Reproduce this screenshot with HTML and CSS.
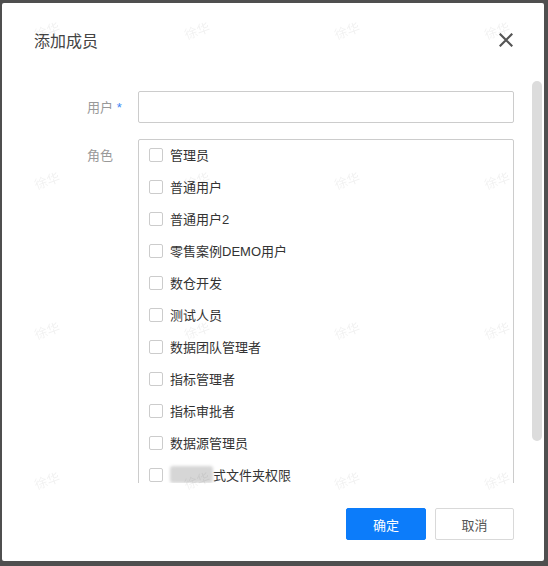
FILE: index.html
```html
<!DOCTYPE html>
<html lang="zh-CN">
<head>
    <meta charset="UTF-8">
    <title>添加成员</title>
    <link rel="stylesheet" href="styles.css">
</head>
<body>
    <div class="dialog">
        <div class="dialog-header">
            <span class="dialog-title">添加成员</span>
            <svg class="close" width="14" height="14" viewBox="0 0 14 14">
                <path d="M1.5 1.5 L12.5 12.5 M12.5 1.5 L1.5 12.5" stroke="#555" stroke-width="2.2" stroke-linecap="square"/>
            </svg>
        </div>

        <div class="body-wrap">
            <div class="dialog-body">
                <div class="form-row">
                    <label class="form-label">用户 <span class="req">*</span></label>
                    <input class="form-input" type="text">
                </div>
                <div class="form-row">
                    <label class="form-label">角色</label>
                    <div class="role-list">
                        <label class="role"><span class="box"></span>管理员</label>
                        <label class="role"><span class="box"></span>普通用户</label>
                        <label class="role"><span class="box"></span>普通用户2</label>
                        <label class="role"><span class="box"></span>零售案例DEMO用户</label>
                        <label class="role"><span class="box"></span>数仓开发</label>
                        <label class="role"><span class="box"></span>测试人员</label>
                        <label class="role"><span class="box"></span>数据团队管理者</label>
                        <label class="role"><span class="box"></span>指标管理者</label>
                        <label class="role"><span class="box"></span>指标审批者</label>
                        <label class="role"><span class="box"></span>数据源管理员</label>
                        <label class="role"><span class="box"></span><span class="blur"></span>式文件夹权限</label>
                        <label class="role"><span class="box"></span>测试角色</label>
                    </div>
                </div>
            </div>
            <!-- 滚动条 -->
            <div class="scroll-thumb"></div>
        </div>

        <div class="dialog-footer">
            <button class="btn btn-primary">确定</button>
            <button class="btn">取消</button>
        </div>
    </div>

    <!-- 水印 -->
    <div class="watermark">
        <span>徐华</span><span>徐华</span><span>徐华</span><span>徐华</span>
        <span>徐华</span><span>徐华</span><span>徐华</span><span>徐华</span>
        <span>徐华</span><span>徐华</span><span>徐华</span><span>徐华</span>
        <span>徐华</span><span>徐华</span><span>徐华</span><span>徐华</span>
    </div>
</body>
</html>
```

FILE: styles.css
```css
* {
    margin: 0;
    padding: 0;
    box-sizing: border-box;
}
body {
    font-family: 'Liberation Sans', 'Noto Sans CJK SC', sans-serif;
    font-size: 13px;
    color: #333;
    background-color: #4f4f4f;
    width: 548px;
    height: 566px;
    overflow: hidden;
}
.dialog {
    margin: 3px 0 0 2px;
    width: 542px;
    height: 558px;
    background-color: #fff;
    border-radius: 2px;
    display: flex;
    flex-direction: column;
}
.dialog-header {
    height: 74px;
    display: flex;
    align-items: center;
    justify-content: space-between;
    padding: 0 31px 0 32px;
}
.dialog-title {
    font-size: 16px;
    color: #444;
}
.close {
    display: block;
}
.body-wrap {
    position: relative;
    height: 406px;
}
.dialog-body {
    height: 100%;
    overflow: hidden;
    padding: 14px 30px 9px 32px;
}
.scroll-thumb {
    position: absolute;
    top: 4px;
    right: 2px;
    width: 10px;
    height: 360px;
    background-color: #dcdcdc;
    border-radius: 5px;
}
.form-row {
    display: flex;
    align-items: flex-start;
    margin-bottom: 16px;
}
.form-row:last-child {
    margin-bottom: 0;
}
.form-label {
    width: 104px;
    flex-shrink: 0;
    padding-left: 53px;
    padding-top: 2px;
    line-height: 30px;
    color: #999;
}
.req {
    color: #3d86f5;
}
.form-input {
    flex: 1;
    height: 32px;
    border: 1px solid #ccc;
    border-radius: 2px;
    outline: none;
}
.role-list {
    flex: 1;
    border: 1px solid #ccc;
    border-radius: 2px;
    padding: 0 10px;
}
.role {
    height: 32px;
    padding-bottom: 3px;
    display: flex;
    align-items: center;
    color: #333;
}
.box {
    width: 14px;
    height: 14px;
    border: 1px solid #ccc;
    border-radius: 2px;
    margin-right: 7px;
    flex-shrink: 0;
}
.blur {
    display: inline-block;
    width: 43px;
    height: 17px;
    background-color: #d6d6d6;
    border-radius: 3px;
    filter: blur(1.5px);
}
.dialog-footer {
    display: flex;
    justify-content: flex-end;
    gap: 9px;
    padding: 25px 30px 0 0;
}
.btn {
    width: 79px;
    height: 32px;
    font-family: 'Liberation Sans', 'Noto Sans CJK SC', sans-serif;
    font-size: 13px;
    color: #555;
    background-color: #fff;
    border: 1px solid #d9d9d9;
    border-radius: 2px;
}
.btn-primary {
    width: 80px;
    color: #fff;
    background-color: #0c7cfa;
    border-color: #0c7cfa;
}
.watermark {
    position: fixed;
    inset: 0;
    pointer-events: none;
    display: grid;
    grid-template-columns: repeat(4, 150px);
    grid-auto-rows: 150px;
    padding: 22px 0 0 30px;
}
.watermark span {
    font-size: 13px;
    color: rgba(0, 0, 0, 0.06);
    transform: rotate(-20deg);
    transform-origin: left top;
    height: 20px;
    width: 40px;
    padding-top: 4px;
}
```
